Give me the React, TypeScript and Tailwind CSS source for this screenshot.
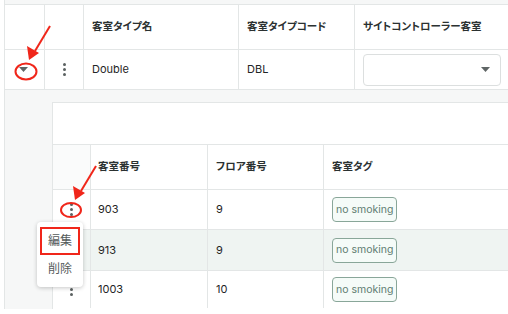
import React from "react";

const font = "font-['Inter','Noto_Sans_CJK_JP',sans-serif] [font-feature-settings:'palt']";

function Kebab() {
  return (
    <div className="flex flex-col items-center gap-[2px]">
      <span className="h-[3px] w-[3px] rounded-full bg-[#5b6161]" />
      <span className="h-[3px] w-[3px] rounded-full bg-[#5b6161]" />
      <span className="h-[3px] w-[3px] rounded-full bg-[#5b6161]" />
    </div>
  );
}

function Caret() {
  return (
    <svg width="9" height="5" viewBox="0 0 9 5">
      <path d="M0 0h9L4.5 5z" fill="#5f6565" />
    </svg>
  );
}

function Tag() {
  return (
    <span className="inline-flex h-[25px] items-center rounded-[4px] border-[1.5px] border-[#89a699] bg-[#f5fbf8] px-[3px] text-[10.5px] text-[#5f7d72]">
      no smoking
    </span>
  );
}

const rooms = [
  { no: "903", floor: "9", h: "h-[40px]", bg: "bg-white" },
  { no: "913", floor: "9", h: "h-[41px]", bg: "bg-[#eff4f2]" },
  { no: "1003", floor: "10", h: "h-[37px]", bg: "bg-white" },
];

export default function App() {
  return (
    <div className={`relative h-[314px] w-[508px] overflow-hidden bg-white text-[#1f2626] ${font}`}>
      <div className="ml-[4px] border-l border-[#e3e6e6]">
        <div className="h-[5px] border-b border-[#e3e6e6] bg-[#f6f7f7]" />
        {/* parent header */}
        <div className="flex h-[45px] border-b border-[#e3e6e6] text-[10.5px] font-bold text-[#2b3131]">
          <div className="w-[40px] border-r border-[#e3e6e6]" />
          <div className="w-[39px] border-r border-[#e3e6e6]" />
          <div className="flex w-[155px] items-center border-r border-[#e3e6e6] pl-[8px]">客室タイプ名</div>
          <div className="flex w-[116px] items-center border-r border-[#e3e6e6] pl-[8px]">客室タイプコード</div>
          <div className="flex flex-1 items-center pl-[8px]">サイトコントローラー客室</div>
        </div>
        {/* parent row */}
        <div className="flex h-[40px] border-b border-[#e3e6e6] text-[11px]">
          <div className="flex w-[40px] items-center justify-center border-r border-[#e3e6e6] pr-[2px]">
            <Caret />
          </div>
          <div className="flex w-[39px] items-center justify-center border-r border-[#e3e6e6]">
            <Kebab />
          </div>
          <div className="flex w-[155px] items-center border-r border-[#e3e6e6] pl-[8px]">Double</div>
          <div className="flex w-[116px] items-center border-r border-[#e3e6e6] pl-[8px]">DBL</div>
          <div className="flex flex-1 items-center pl-[8px] pr-[7px]">
            <div className="flex h-[32px] w-full items-center justify-end rounded-[4px] border border-[#dcdfdf] bg-white pr-[10px]">
              <Caret />
            </div>
          </div>
        </div>
        {/* expanded area */}
        <div className="h-[219px] bg-[#f6f7f7] pl-[47px] pt-[12px]">
          <div className="h-full border-l border-t border-[#e3e6e6] bg-white">
            <div className="h-[42px] border-b border-[#e3e6e6]" />
            <div className="flex h-[45px] border-b border-[#e3e6e6] text-[10.5px] font-bold text-[#2b3131]">
              <div className="w-[38px] border-r border-[#e3e6e6] bg-[#fafbfb]" />
              <div className="flex w-[117px] items-center border-r border-[#e3e6e6] pl-[7px]">客室番号</div>
              <div className="flex w-[116px] items-center border-r border-[#e3e6e6] pl-[8px]">フロア番号</div>
              <div className="flex flex-1 items-center pl-[8px]">客室タグ</div>
            </div>
            {rooms.map((r, i) => (
              <div key={r.no} className={`flex ${r.h} ${r.bg} ${i < 2 ? "border-b border-[#e3e6e6]" : ""} text-[11px]`}>
                <div className="flex w-[38px] items-center justify-center border-r border-[#e3e6e6]">
                  <Kebab />
                </div>
                <div className="flex w-[117px] items-center border-r border-[#e3e6e6] pl-[7px]">{r.no}</div>
                <div className="flex w-[116px] items-center border-r border-[#e3e6e6] pl-[8px]">{r.floor}</div>
                <div className="flex flex-1 items-center pl-[8px]">
                  <Tag />
                </div>
              </div>
            ))}
          </div>
        </div>
      </div>

      {/* row action menu */}
      <div className="absolute left-[37px] top-[222px] flex h-[65px] w-[46px] flex-col items-center rounded-[4px] bg-white pt-[5px] text-[12px] text-[#555b5b] shadow-[0_1px_4px_rgba(0,0,0,0.22)]">
        <div className="flex h-[28px] w-[40px] items-center justify-center border-2 border-[#f0261a]">編集</div>
        <div className="flex h-[27px] items-center">削除</div>
      </div>

      {/* annotations */}
      <svg className="pointer-events-none absolute left-0 top-0" width="508" height="314" viewBox="0 0 508 314">
        <g stroke="#f0261a" strokeWidth="2" fill="none">
          <line x1="50" y1="26" x2="35" y2="51" />
          <ellipse cx="26" cy="71.5" rx="10.5" ry="8" />
          <line x1="96" y1="166" x2="81" y2="191" />
          <ellipse cx="71" cy="210" rx="10" ry="7" />
        </g>
        <g fill="#f0261a">
          <path d="M29 60 L27 46 L39 53 Z" />
          <path d="M75 200 L73 186 L85 193 Z" />
        </g>
      </svg>
    </div>
  );
}
